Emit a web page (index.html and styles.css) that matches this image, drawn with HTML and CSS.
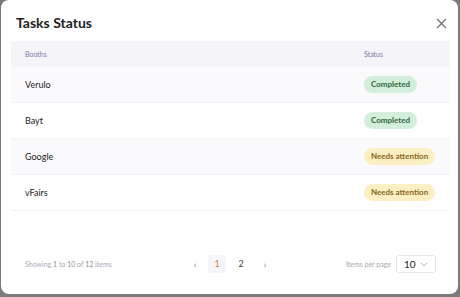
FILE: index.html
```html
<!DOCTYPE html>
<html lang="en">
<head>
  <meta charset="UTF-8">
  <title>Tasks Status</title>
  <link rel="stylesheet" href="styles.css">
</head>
<body>
  <div class="modal">
    <div class="modal-head">
      <h2>Tasks Status</h2>
      <svg class="close" width="11" height="11" viewBox="0 0 11 11">
        <path d="M1 1L10 10M10 1L1 10" stroke="#6f6f6f" stroke-width="1.2" fill="none"/>
      </svg>
    </div>

    <table class="tasks">
      <thead>
        <tr>
          <th>Booths</th>
          <th class="col-status">Status</th>
        </tr>
      </thead>
      <tbody>
        <tr><td>Verulo</td><td class="col-status"><span class="pill done">Completed</span></td></tr>
        <tr><td>Bayt</td><td class="col-status"><span class="pill done">Completed</span></td></tr>
        <tr><td>Google</td><td class="col-status"><span class="pill warn">Needs attention</span></td></tr>
        <tr><td>vFairs</td><td class="col-status"><span class="pill warn">Needs attention</span></td></tr>
      </tbody>
    </table>

    <div class="foot">
      <div class="showing">Showing <b>1</b> to <b>10</b> of <b>12</b> items</div>
      <div class="pager">
        <span class="arrow">&lsaquo;</span>
        <span class="page active">1</span>
        <span class="page">2</span>
        <span class="arrow">&rsaquo;</span>
      </div>
      <div class="per-page">
        <span>Items per page</span>
        <div class="select">
          10
          <svg width="8" height="5" viewBox="0 0 8 5"><path d="M1 1L4 4L7 1" stroke="#a8acb6" stroke-width="0.9" fill="none"/></svg>
        </div>
      </div>
    </div>
  </div>
</body>
</html>
```

FILE: styles.css
```css
body {
  margin:0;
  padding:0;
  background:#7b7b7b;
  font-family: "Lato", "Noto Sans", sans-serif;
}

.modal {
  background:white;
  width:457px;
  height:294px;
  margin-left:1px;
  border-radius:8px;
  box-sizing:border-box;
  padding:10px 8px 21px 10px;
  display:flex;
  flex-direction:column;
}

.modal-head {
  display:flex;
  align-items:center;
  justify-content:space-between;
  height:24px;
  padding:0 3px 0 5px;
}
.modal-head h2 {
  margin:0;
  font-size:14px;
  font-weight:700;
  color:#222;
}
.close {
  margin-top:3px;
}

.tasks {
  margin-top:7px;
  width:100%;
  border-collapse:collapse;
}
.tasks th {
  background:#f4f4f9;
  height:26px;
  text-align:left;
  font-size:7px;
  font-weight:400;
  color:#7f7aa6;
  padding:0 0 0 14px;
}
.tasks td {
  height:35px;
  padding:0 0 0 14px;
  font-size:9px;
  color:#222;
  border-bottom:1px solid #f3f3f6;
}
.tasks tbody tr:nth-child(odd) td {
  background:#fafafc;
}
.tasks .col-status {
  width:86px;
  padding-left:0;
}

.pill {
  display:inline-block;
  padding:0 7px;
  height:17px;
  line-height:17px;
  border-radius:9px;
  font-size:8px;
  font-weight:700;
}
.done {
  background:#d3eedb;
  color:#2e6a3c;
}
.warn {
  background:#fcefc4;
  color:#8a6514;
}

.foot {
  margin-top:auto;
  display:flex;
  align-items:center;
  height:18px;
  padding:0 14px 0 14px;
}
.showing {
  width:163px;
  font-size:7px;
  color:#a5a9b4;
}
.showing b {
  font-weight:400;
  color:#8c909c;
}
.pager {
  display:flex;
  align-items:center;
  gap:6px;
}
.arrow {
  font-size:9px;
  color:#777;
  width:14px;
  text-align:center;
}
.arrow:last-child {
  margin-left:2px;
}
.page {
  width:18px;
  height:18px;
  line-height:18px;
  text-align:center;
  font-size:9px;
  color:#444;
  border-radius:3px;
}
.page.active {
  background:#f5f6fa;
  color:#e8743f;
}
.per-page {
  margin-left:auto;
  display:flex;
  align-items:center;
  gap:5px;
  font-size:7px;
  color:#a5a9b4;
}
.select {
  width:40px;
  height:18px;
  box-sizing:border-box;
  border:1px solid #e6e8ee;
  border-radius:3px;
  display:flex;
  align-items:center;
  justify-content:space-between;
  padding:0 7px;
  font-size:10px;
  color:#222;
}
```
